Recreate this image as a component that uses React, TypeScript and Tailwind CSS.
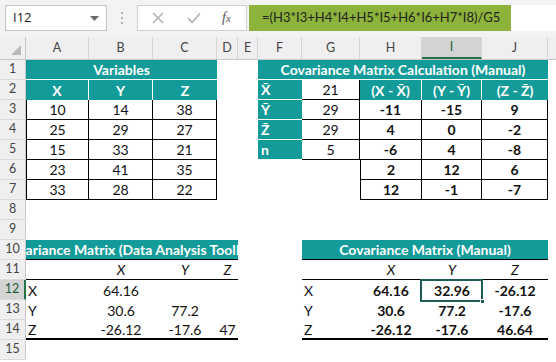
import React from "react";

const TEAL = "bg-[#129b98]";

function RH({ n, active }: { n?: string; active?: boolean }) {
  return (
    <div
      className={
        "w-[26px] shrink-0 h-full flex items-center justify-center text-[12.5px] border-b border-[#dadada] " +
        (active
          ? "bg-[#d3d3d3] text-[#1e5c38] border-r-2 border-r-[#217346]"
          : "bg-[#efefef] text-[#444] border-r border-r-[#c8c8c8]")
      }
    >
      {n}
    </div>
  );
}

function Cell({
  w,
  className = "",
  children,
}: {
  w: string;
  className?: string;
  children?: React.ReactNode;
}) {
  return (
    <div
      className={
        w +
        " shrink-0 h-full flex items-center justify-center whitespace-nowrap overflow-hidden text-[14px] text-[#111] " +
        className
      }
    >
      {children}
    </div>
  );
}

function Row({ n, active, children }: { n: string; active?: boolean; children?: React.ReactNode }) {
  return (
    <div className="flex h-[20px]">
      <RH n={n} active={active} />
      {children}
    </div>
  );
}

const tealHead = TEAL + " text-white font-bold";
const bd = "border-b border-r border-black";

function TopBar() {
  return (
    <div className="h-[37px] bg-[#f3f3f3] flex items-start pt-[5px]">
      <div className="ml-[5px] w-[102px] shrink-0 h-[26px] bg-white border border-[#c6c6c6] flex items-center justify-between pl-[7px] pr-[7px]">
        <span className="text-[13px] text-[#222] font-['Open_Sans']">I12</span>
        <svg width="9" height="5" viewBox="0 0 9 5">
          <path d="M0 0 L9 0 L4.5 5 Z" fill="#6b6b6b" />
        </svg>
      </div>
      <div className="w-[30px] shrink-0 h-[26px] flex flex-col items-center justify-center gap-[3px]">
        <div className="w-[2px] h-[2px] bg-[#b0b0b0]" />
        <div className="w-[2px] h-[2px] bg-[#b0b0b0]" />
        <div className="w-[2px] h-[2px] bg-[#b0b0b0]" />
      </div>
      <div className="w-[110px] shrink-0 h-[26px] bg-white border border-[#d0d0d0] flex items-center">
        <svg width="12" height="12" viewBox="0 0 12 12" className="ml-[14px]">
          <path d="M1 1 L11 11 M11 1 L1 11" stroke="#b4b4b4" strokeWidth="1.6" />
        </svg>
        <svg width="14" height="12" viewBox="0 0 14 12" className="ml-[23px]">
          <path d="M1 6 L5 10.5 L13 1.5" stroke="#b4b4b4" strokeWidth="1.8" fill="none" />
        </svg>
        <span className="ml-[21px] text-[14px] italic text-[#555] font-['Liberation_Serif'] leading-none">
          f<span className="text-[11px]">x</span>
        </span>
      </div>
      <div className="ml-[2px] flex-1 min-w-0 h-[26px] bg-white flex overflow-hidden">
        <span className="h-full bg-[#8db33a] flex items-center pl-[13px] pr-[11px] text-[13px] text-[#222] whitespace-nowrap">
          =(H3*I3+H4*I4+H5*I5+H6*I6+H7*I8)/G5
        </span>
      </div>
    </div>
  );
}

function ColHeaders() {
  const cols: [string, string][] = [
    ["w-[63px]", "A"],
    ["w-[64px]", "B"],
    ["w-[64px]", "C"],
    ["w-[21px]", "D"],
    ["w-[20px]", "E"],
    ["w-[44px]", "F"],
    ["w-[58px]", "G"],
    ["w-[62px]", "H"],
    ["w-[60px]", "I"],
    ["w-[66px]", "J"],
  ];
  return (
    <div className="flex h-[23px] bg-[#efefef] border-b border-[#c8c8c8]">
      <div className="w-[26px] shrink-0 h-full border-r border-[#c8c8c8] flex items-end justify-end pr-[4px] pb-[4px]">
        <svg width="10" height="10" viewBox="0 0 10 10">
          <path d="M10 0 L10 10 L0 10 Z" fill="#b9b9b9" />
        </svg>
      </div>
      {cols.map(([w, l]) => (
        <div
          key={l}
          className={
            w +
            " shrink-0 h-full flex items-center justify-center text-[12.5px] border-r border-[#d4d4d4] " +
            (l === "I" ? "bg-[#d3d3d3] text-[#1e5c38] border-b-2 border-b-[#217346]" : "text-[#444]")
          }
        >
          {l}
        </div>
      ))}
      <div className="flex-1" />
    </div>
  );
}

export default function App() {
  const data = [
    ["10", "14", "38"],
    ["25", "29", "27"],
    ["15", "33", "21"],
    ["23", "41", "35"],
    ["33", "28", "22"],
  ];
  const right: [string, string, string, string, string][] = [
    ["Ȳ", "29", "-11", "-15", "9"],
    ["Z̄", "29", "4", "0", "-2"],
    ["n", "5", "-6", "4", "-8"],
  ];
  return (
    <div className="w-[556px] h-[362px] bg-white overflow-hidden font-['Lato',sans-serif]">
      <TopBar />
      <ColHeaders />
      {/* Row 1 */}
      <Row n="1">
        <Cell w="w-[191px]" className={tealHead + " border-b border-white"}>
          Variables
        </Cell>
        <Cell w="w-[41px]" />
        <Cell w="w-[290px]" className={tealHead + " border-b border-white"}>
          Covariance Matrix Calculation (Manual)
        </Cell>
      </Row>
      {/* Row 2 */}
      <Row n="2">
        <Cell w="w-[63px]" className={tealHead + " border-r border-white"}>X</Cell>
        <Cell w="w-[64px]" className={tealHead + " border-r border-white"}>Y</Cell>
        <Cell w="w-[64px]" className={tealHead}>Z</Cell>
        <Cell w="w-[41px]" />
        <Cell w="w-[44px]" className={tealHead + " justify-start pl-[3px] border-b border-white"}>X̄</Cell>
        <Cell w="w-[58px]" className={bd}>21</Cell>
        <Cell w="w-[62px]" className={tealHead + " border-r border-white"}>(X - X̄)</Cell>
        <Cell w="w-[60px]" className={tealHead + " border-r border-white"}>(Y - Ȳ)</Cell>
        <Cell w="w-[66px]" className={tealHead}>(Z - Z̄)</Cell>
      </Row>
      {data.map((r, i) => (
        <Row key={i} n={String(i + 3)}>
          <Cell w="w-[63px]" className={bd + " border-l"}>{r[0]}</Cell>
          <Cell w="w-[64px]" className={bd}>{r[1]}</Cell>
          <Cell w="w-[64px]" className={bd}>{r[2]}</Cell>
          <Cell w="w-[41px]" />
          {i < 3 ? (
            <>
              <Cell w="w-[44px]" className={tealHead + " justify-start pl-[3px] border-b border-white"}>
                {right[i][0]}
              </Cell>
              <Cell w="w-[58px]" className={bd}>{right[i][1]}</Cell>
              <Cell w="w-[62px]" className={bd + " font-bold"}>{right[i][2]}</Cell>
              <Cell w="w-[60px]" className={bd + " font-bold"}>{right[i][3]}</Cell>
              <Cell w="w-[66px]" className={bd + " font-bold"}>{right[i][4]}</Cell>
            </>
          ) : (
            <>
              <Cell w="w-[102px]" />
              <Cell w="w-[62px]" className={bd + " border-l font-bold"}>{i === 3 ? "2" : "12"}</Cell>
              <Cell w="w-[60px]" className={bd + " font-bold"}>{i === 3 ? "12" : "-1"}</Cell>
              <Cell w="w-[66px]" className={bd + " font-bold"}>{i === 3 ? "6" : "-7"}</Cell>
            </>
          )}
        </Row>
      ))}
      <Row n="8" />
      <Row n="9" />
      {/* Row 10 */}
      <Row n="10">
        <Cell w="w-[212px]" className={tealHead + " border-b border-black"}>
          Covariance Matrix (Data Analysis ToolPak)
        </Cell>
        <Cell w="w-[64px]" />
        <Cell w="w-[246px]" className={tealHead + " border-b border-black"}>
          Covariance Matrix (Manual)
        </Cell>
      </Row>
      {/* Row 11 */}
      <Row n="11">
        <Cell w="w-[63px]" className="border-b border-black" />
        <Cell w="w-[64px]" className="border-b border-black italic">X</Cell>
        <Cell w="w-[64px]" className="border-b border-black italic">Y</Cell>
        <Cell w="w-[21px]" className="border-b border-black italic">Z</Cell>
        <Cell w="w-[64px]" />
        <Cell w="w-[58px]" className="border-b border-black" />
        <Cell w="w-[62px]" className="border-b border-black italic">X</Cell>
        <Cell w="w-[60px]" className="border-b border-black italic">Y</Cell>
        <Cell w="w-[66px]" className="border-b border-black italic">Z</Cell>
      </Row>
      {/* Row 12 */}
      <Row n="12" active>
        <Cell w="w-[63px]" className="justify-start pl-[2px]">X</Cell>
        <Cell w="w-[64px]">64.16</Cell>
        <Cell w="w-[64px]" />
        <Cell w="w-[21px]" />
        <Cell w="w-[64px]" />
        <Cell w="w-[58px]" className="justify-start pl-[2px]">X</Cell>
        <Cell w="w-[62px]" className="font-bold">64.16</Cell>
        <div className="w-[60px] shrink-0 h-full relative flex items-center justify-center text-[14px] font-bold text-[#111]">
          32.96
          <div className="absolute -left-[2px] -top-[1px] -right-[1px] -bottom-[2px] border-2 border-[#1d5b56]" />
          <div className="absolute -right-[3px] -bottom-[4px] w-[5px] h-[5px] bg-[#1d5b56] border border-white" />
        </div>
        <Cell w="w-[66px]" className="font-bold">-26.12</Cell>
      </Row>
      {/* Row 13 */}
      <Row n="13">
        <Cell w="w-[63px]" className="justify-start pl-[2px]">Y</Cell>
        <Cell w="w-[64px]">30.6</Cell>
        <Cell w="w-[64px]">77.2</Cell>
        <Cell w="w-[21px]" />
        <Cell w="w-[64px]" />
        <Cell w="w-[58px]" className="justify-start pl-[2px]">Y</Cell>
        <Cell w="w-[62px]" className="font-bold">30.6</Cell>
        <Cell w="w-[60px]" className="font-bold">77.2</Cell>
        <Cell w="w-[66px]" className="font-bold">-17.6</Cell>
      </Row>
      {/* Row 14 */}
      <Row n="14">
        <Cell w="w-[63px]" className="justify-start pl-[2px] border-b-2 border-black">Z</Cell>
        <Cell w="w-[64px]" className="border-b-2 border-black">-26.12</Cell>
        <Cell w="w-[64px]" className="border-b-2 border-black">-17.6</Cell>
        <Cell w="w-[21px]" className="border-b-2 border-black overflow-visible">47</Cell>
        <Cell w="w-[64px]" />
        <Cell w="w-[58px]" className="justify-start pl-[2px] border-b-2 border-black">Z</Cell>
        <Cell w="w-[62px]" className="font-bold border-b-2 border-black">-26.12</Cell>
        <Cell w="w-[60px]" className="font-bold border-b-2 border-black">-17.6</Cell>
        <Cell w="w-[66px]" className="font-bold border-b-2 border-black">46.64</Cell>
      </Row>
      <Row n="15" />
    </div>
  );
}
